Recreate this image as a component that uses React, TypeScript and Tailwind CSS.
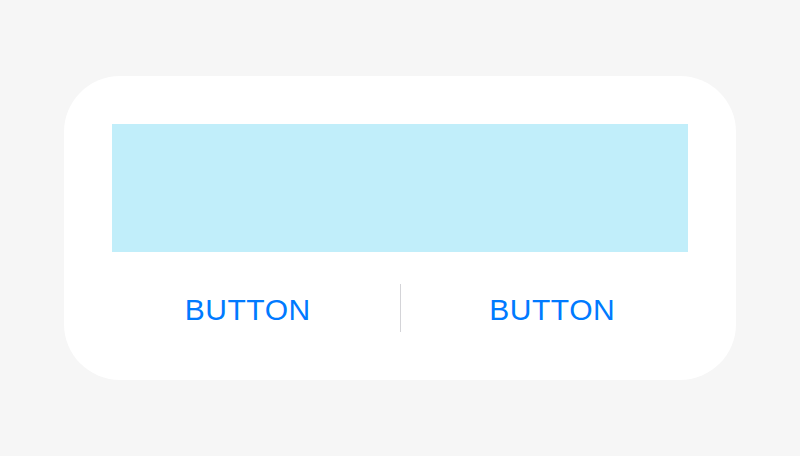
export default function App() {
  return (
    <div className="w-[800px] h-[456px] bg-[#f6f6f6] flex items-center justify-center" style={{ fontFamily: '"Liberation Sans", Arial, sans-serif' }}>
      <div className="w-[672px] h-[304px] bg-white rounded-[56px] p-[48px] flex flex-col">
        <div className="h-[128px] bg-[#c1eefa]" />
        <div className="mt-[32px] h-[48px] flex items-stretch -mx-[16px]">
          <button className="flex-1 flex items-center justify-center pt-[3px] text-[30px] tracking-[0.5px] leading-none text-[#007aff]">BUTTON</button>
          <div className="w-px bg-[#d4d4d8]" />
          <button className="flex-1 flex items-center justify-center pt-[3px] text-[30px] tracking-[0.5px] leading-none text-[#007aff]">BUTTON</button>
        </div>
      </div>
    </div>
  );
}
